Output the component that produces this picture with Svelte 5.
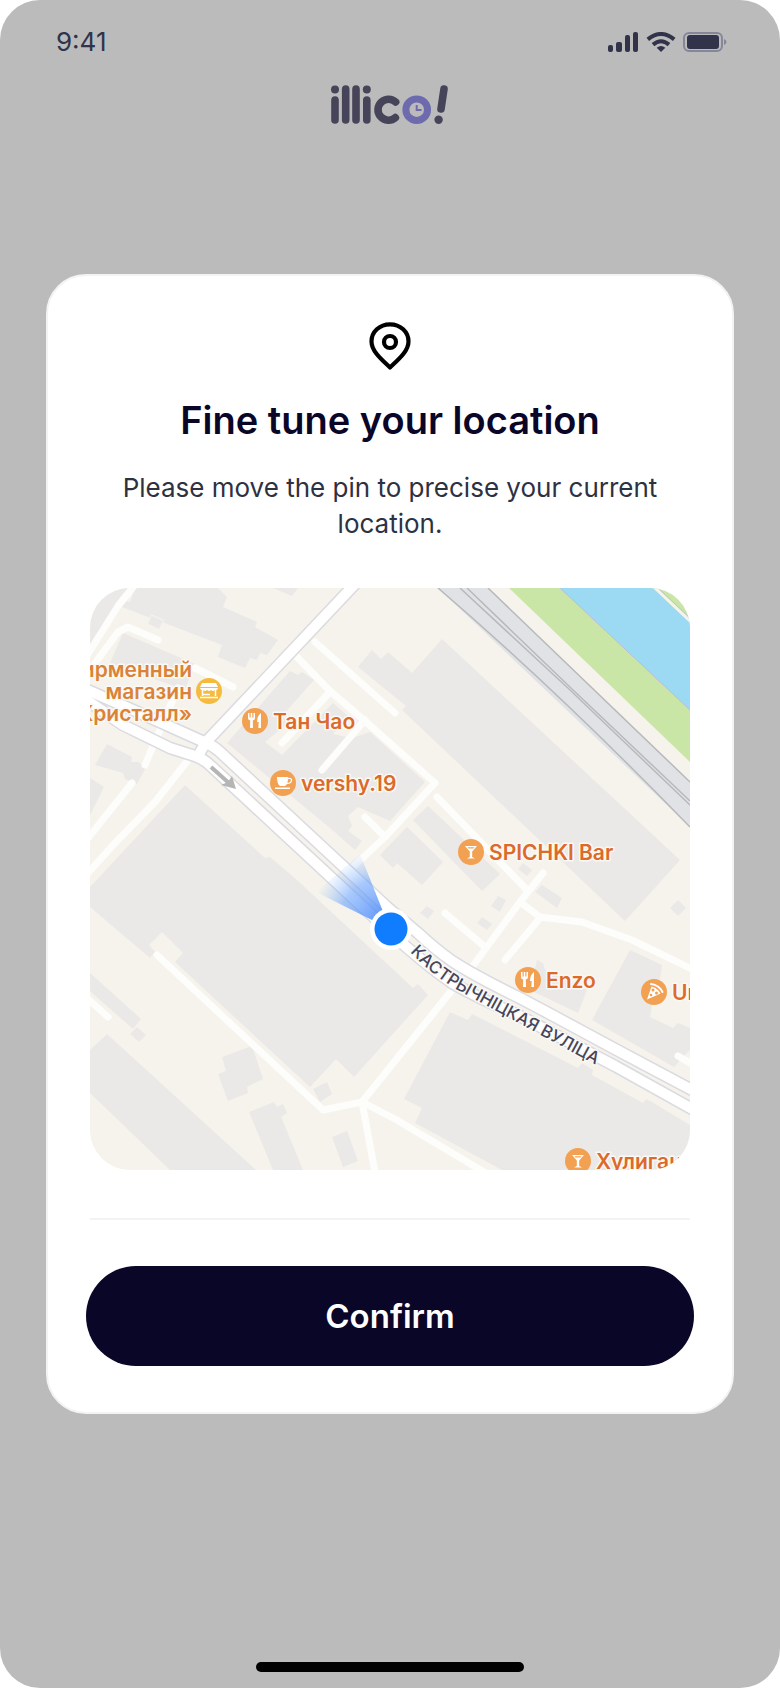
<script lang="ts">
  type Place = {
    name: string;
    icon: 'food' | 'coffee' | 'bar' | 'pizza';
    x: number;
    y: number;
  };

  const places: Place[] = [
    { name: 'Тан Чао', icon: 'food', x: 165, y: 133 },
    { name: 'vershy.19', icon: 'coffee', x: 193, y: 195 },
    { name: 'SPICHKI Bar', icon: 'bar', x: 381, y: 264 },
    { name: 'Enzo', icon: 'food', x: 438, y: 392 },
    { name: 'Ur', icon: 'pizza', x: 564, y: 404 },
    { name: 'Хулиган', icon: 'bar', x: 488, y: 573 }
  ];

  const buildings = [
    '0,0 38,0 28,12 25,17 8,52 0,62',
    '45,0 128,0 137,9 133,19 167,34 165,39 188,52 177,67 170,65 167,72 160,70 155,80 128,69 132,57 72,34 58,29 27,17 28,10 40,14',
    '33,45 105,76 95,102 20,75',
    '183,0 208,0 202,8',
    '200,83 208,87 212,84 224,92 192,128 199,134 175,154 192,167 243,115 258,128 243,146 262,150 280,144 335,194 300,233 268,219 258,228 262,238 258,243 272,253 265,262 240,240 137,155',
    '282,62 291,71 298,64 322,85 352,51 590,272 535,333 312,122 316,118 268,79',
    '338,218 410,286 392,303 323,232',
    '317,239 353,274 332,297 307,275 303,280 290,267',
    '433,275 442,282 437,288 428,281',
    '452,297 472,310 467,320 445,304',
    '408,308 416,312 410,324 401,318',
    '337,318 344,323 338,331 330,325',
    '392,329 402,336 397,342 387,335',
    '588,312 596,320 588,328 580,320',
    '447,372 453,375 455,382 497,402 488,425 440,402',
    '540,362 572,377 570,392 566,395 560,429 583,440 588,435 600,440 600,462 593,469 584,479 502,432',
    '360,424 378,432 382,426 488,480 492,475 503,482 502,487 553,515 556,511 562,514 600,537 600,582 412,582 325,535 332,520 314,511',
    '95,197 175,270 180,269 207,292 323,400 328,396 338,407 264,489 246,471 220,499 85,374 93,365 72,344 59,357 65,364 60,370 0,319 0,299',
    '0,385 51,431 43,441 0,403',
    '47,439 56,447 49,454 40,446',
    '17,446 166,582 80,582 0,505 0,462',
    '132,469 162,458 173,491 157,499 158,505 138,513 128,486 136,483',
    '159,524 184,514 187,519 193,516 197,525 191,529 213,582 183,582',
    '237,494 242,506 230,514 223,501',
    '257,543 268,573 253,579 242,549',
    '17,156 42,169 41,174 48,174 56,179 47,196 35,191 33,185 5,177',
    '0,190 14,199 0,227'
  ];

  const lanes = [
    'M44 -2L28 18L-2 66',
    'M-2 85L28 44L38 39L68 52',
    'M105 80L143 99',
    'M88 100L55 177',
    'M98 172L65 214L25 255L-2 285',
    'M42 195L-2 250',
    'M207 69L240 103L275 133L345 195L295 249L262 280',
    'M225 54L305 125',
    'M240 104L192 155',
    'M275 132L232 182',
    'M275 229L293 247',
    'M347 209L437 302',
    'M453 285L430 314L382 379',
    'M430 314L450 329L492 334L542 352L602 381',
    'M450 330L415 372',
    'M355 325L395 359',
    'M362 402L272 514L233 522L67 367',
    'M272 514L285 584',
    'M272 514L305 531L394 584',
    'M-2 411L18 429',
    'M588 468L602 476'
  ];

  const roads = [
    'M266 -5L116 154L108 168',
    'M-5 101L43 122L112 153Q122 157 129 163L297 319L328 345Q345 361 362 373Q385 388 428 409L462 427L525 461L604 503',
    'M-5 111L33 137L80 160L105 168Q114 171 122 179L301 345Q332 374 362 395Q390 411 428 427L525 478L604 522'
  ];

  const shopLines = [
    { text: 'Фирменный', y: 89 },
    { text: 'магазин', y: 111 },
    { text: '«Кристалл»', y: 133 }
  ];

  let confirmed = false;
</script>

<main class="screen">
  <div class="status-bar">
    <span class="time">9:41</span>
    <svg class="status-icons" viewBox="0 0 120 20" role="img" aria-label="Signal, Wi-Fi, battery">
      <g fill="#30334a">
        <rect x="0" y="13" width="5" height="7" rx="2" />
        <rect x="8" y="10" width="6" height="10" rx="2" />
        <rect x="17" y="3" width="5" height="17" rx="2" />
        <rect x="25" y="0" width="5" height="20" rx="2" />
        <path d="M53 20L48.7 15.7Q53 12.2 57.3 15.7Z" />
        <rect x="79" y="3" width="32" height="14" rx="3" />
      </g>
      <g fill="none" stroke="#30334a" stroke-width="4">
        <path d="M39.8 7.4Q53 -3.4 66.2 7.4" />
        <path d="M45 12.6Q53 6 61 12.6" />
      </g>
      <rect x="76" y="1" width="38" height="18" rx="5" fill="none" stroke="#85869a" stroke-width="2" />
      <path d="M116 7Q118.5 8 118.5 10T116 13Z" fill="#85869a" />
    </svg>
  </div>

  <svg class="logo" viewBox="0 0 118 41" role="img" aria-label="illico!">
    <g stroke="#464459" stroke-width="7.6" stroke-linecap="round" fill="none">
      <line x1="4" y1="16" x2="4" y2="36" />
      <line x1="14.7" y1="5" x2="14.7" y2="36" />
      <line x1="25" y1="5" x2="25" y2="36" />
      <line x1="35.8" y1="16" x2="35.8" y2="36" />
      <circle cx="57.5" cy="25.7" r="10.5" stroke-dasharray="48 18" transform="rotate(49 57.5 25.7)" />
      <line x1="113" y1="5" x2="110" y2="25" />
    </g>
    <g fill="#464459">
      <circle cx="4" cy="5.5" r="4" />
      <circle cx="35.8" cy="5.5" r="4" />
      <circle cx="107.6" cy="35.7" r="4.2" />
    </g>
    <circle cx="85.7" cy="25.7" r="10.8" fill="none" stroke="#6d6bad" stroke-width="7" />
    <polyline points="85.7,21 85.7,26 90.5,26" fill="none" stroke="#6d6bad" stroke-width="2" />
  </svg>

  <section class="card" role="dialog" aria-labelledby="title" aria-describedby="hint">
    <svg class="pin" viewBox="0 0 42 48" aria-hidden="true">
      <path
        d="M21 45.5C12 37 2.5 29 2.5 19.5C2.5 10 10.5 2.3 21 2.3S39.5 10 39.5 19.5C39.5 29 30 37 21 45.5Z"
        fill="none" stroke="#000" stroke-width="4.2" stroke-linejoin="round" />
      <circle cx="21" cy="20" r="6" fill="none" stroke="#000" stroke-width="4.2" />
    </svg>
    <h1 id="title">Fine tune your location</h1>
    <p id="hint">Please move the pin to precise your current location.</p>

    <svg class="map" viewBox="0 0 600 582" role="img" aria-label="Map">
      <defs>
        <radialGradient id="beam" gradientUnits="userSpaceOnUse" cx="300" cy="341" r="82">
          <stop offset="0.2" stop-color="#4f8dfb" stop-opacity="0.85" />
          <stop offset="0.65" stop-color="#6fa5fa" stop-opacity="0.6" />
          <stop offset="1" stop-color="#8dbbfa" stop-opacity="0" />
        </radialGradient>
        <path id="street" d="M320 364Q345 390 373 405L530 490" />
      </defs>

      <rect width="600" height="582" fill="#f6f3ec" />

      <!-- river and its banks -->
      <path d="M419 0H600V174Z" fill="#c9e6a6" />
      <path d="M470 0H563L600 35V122Z" fill="#9cd9f3" />
      <path d="M470 0L600 122" stroke="#b9bddc" fill="none" />
      <path d="M564 -1L601 34" stroke="#f6f3ec" stroke-width="3" fill="none" />
      <path d="M567 -1L601 31" stroke="#bfc3d0" fill="none" />

      <!-- railway -->
      <path d="M348 0H398L600 194V239Z" fill="#e1e2e6" />
      <path d="M348 0Q470 105 600 239M398 0L600 194" stroke="#b7b9bb" stroke-width="1.5" fill="none" />
      <path d="M370 0L480 102L600 217M377 0L482 101L600 213" stroke="#b7b9bb" stroke-width="1.5" fill="none" />

      {#each buildings as points}
        <polygon {points} fill="#eae9e7" />
      {/each}

      <g fill="none" stroke="#fdfdfb" stroke-width="7" stroke-linecap="round" stroke-linejoin="round">
        {#each lanes as d}
          <path {d} />
        {/each}
      </g>

      <rect x="59" y="29" width="13" height="10" fill="#eae9e7" stroke="#f4f3f1" transform="rotate(24 65 34)" />

      <g fill="none" stroke="#dadae1" stroke-width="13" stroke-linejoin="round">
        {#each roads as d}
          <path {d} />
        {/each}
      </g>
      <g fill="none" stroke="#fff" stroke-width="10" stroke-linejoin="round">
        {#each roads as d}
          <path {d} />
        {/each}
      </g>

      <path d="M121 179L140 196" stroke="#b5b5b5" stroke-width="4" fill="none" />
      <path d="M146 201L142 188L138 194L131 197Z" fill="#b5b5b5" />

      <text class="street-name">
        <textPath href="#street">КАСТРЫЧНІЦКАЯ ВУЛІЦА</textPath>
      </text>

      <g class="shop">
        {#each shopLines as line}
          <text x="102" y={line.y} text-anchor="end">{line.text}</text>
        {/each}
      </g>
      <g transform="translate(119 103)">
        <circle r="13" fill="#f5ba3e" />
        <path d="M-7 -8H7L9 -4H-9Z" fill="#fff" />
        <path d="M-9 -3H9Q8 0 6 -1Q4 1 2 -1Q0 1 -2 -1Q-4 1 -6 -1Q-8 0 -9 -3Z" fill="#fff" />
        <path d="M-6.5 -1V5M6.5 -1V5M-9 6.5H9M-6 3.5H1" stroke="#fff" stroke-width="1.5" />
      </g>

      {#each places as place}
        <g transform={`translate(${place.x} ${place.y})`}>
          <circle r="13" fill="#f2a152" />
          {#if place.icon === 'food'}
            <path d="M-7 -8V-3Q-7 -1 -4.8 -0.5L-5 7H-2L-2.2 -0.5Q0 -1 0 -3V-8H-1.5V-3.5H-2.7V-8H-4.3V-3.5H-5.5V-8Z" fill="#fff" />
            <path d="M6 -8Q2 -5 2 1H3.7L3.3 7H6Z" fill="#fff" />
          {:else if place.icon === 'coffee'}
            <path d="M-6 -6H5Q5 2 2 3H-3Q-6 1 -6 -6ZM-8 4.5H7V6H-8Z" fill="#fff" />
            <path d="M5 -4.5Q9 -5 8.5 -2.5Q8 0.5 4 0.5" fill="none" stroke="#fff" stroke-width="1.4" />
          {:else if place.icon === 'bar'}
            <path d="M-6 -6H6L1.2 -0.5V5L4 6.5H-4L-1.2 5V-0.5Z" fill="#fff" />
            <path d="M-3.5 -4.8H3.5L2.5 -3.6H-2.5Z" fill="#f2a152" />
          {:else}
            <path d="M-7 7.5L-2.5 -5.5Q3.5 -4 6.5 1.5Z" fill="#fff" />
            <path d="M-3 -8Q5 -7 8.5 0" fill="none" stroke="#fff" stroke-width="2" stroke-linecap="round" />
            <circle cx="-1" cy="-2" r="1.5" fill="#f2a152" />
            <circle cx="2.5" cy="1" r="1.5" fill="#f2a152" />
            <circle cx="-3" cy="3" r="1.3" fill="#f2a152" />
          {/if}
          <text class="place" x="18" y="8">{place.name}</text>
        </g>
      {/each}

      <path d="M300 341L226 304L270 266Z" fill="url(#beam)" />
      <circle cx="301" cy="341" r="21" fill="#fff" />
      <circle cx="301" cy="341" r="16.5" fill="#107dff" />
    </svg>

    <hr />
    <button type="button" on:click={() => (confirmed = true)} disabled={confirmed}>Confirm</button>
  </section>

  <div class="home-indicator"></div>
</main>

<style>
  :global(body) {
    margin: 0;
    background: #fff;
  }

  .screen {
    box-sizing: border-box;
    display: flex;
    flex-direction: column;
    min-height: 100vh;
    padding: 24px 46px 16px;
    border-radius: 40px;
    background: #bbb;
    font-family: Inter, 'Noto Sans', sans-serif;
  }

  .status-bar {
    display: flex;
    align-items: center;
    justify-content: space-between;
    height: 36px;
    padding: 0 6px 0 10px;
  }

  .time {
    color: #30334a;
    font-size: 26px;
    line-height: 36px;
  }

  .status-icons {
    width: 120px;
    height: 20px;
  }

  .logo {
    align-self: center;
    width: 118px;
    height: 41px;
    margin-top: 24px;
  }

  .card {
    box-sizing: border-box;
    display: flex;
    flex-direction: column;
    align-items: center;
    margin: 149px 0 40px;
    padding: 46px 38px;
    border: 2px solid #f3f3f3;
    border-radius: 40px;
    background: #fff;
    text-align: center;
  }

  .pin {
    width: 42px;
    height: 48px;
  }

  h1 {
    margin: 24px 0 0;
    color: #0a0628;
    font-size: 38px;
    font-weight: 600;
    line-height: 52px;
  }

  p {
    margin: 24px 32px 0;
    color: #2e3142;
    font-size: 26px;
    line-height: 36px;
  }

  .map {
    display: block;
    width: calc(100% - 8px);
    margin-top: 46px;
    border-radius: 40px;
    overflow: hidden;
  }

  .map text {
    stroke: #fbf9f5;
    stroke-width: 3px;
    stroke-linejoin: round;
    paint-order: stroke;
  }

  .place,
  .shop {
    fill: #dc6a2a;
    font-size: 21px;
    font-weight: 600;
  }

  .shop {
    fill: #da8338;
  }

  .street-name {
    fill: #45455c;
    font-size: 17px;
    font-weight: 500;
  }

  hr {
    width: calc(100% - 8px);
    height: 2px;
    margin: 48px 0 46px;
    border: 0;
    background: #f3f3f3;
  }

  button {
    width: 100%;
    height: 100px;
    border: 0;
    border-radius: 50px;
    background: #0a0628;
    color: #fff;
    font-family: inherit;
    font-size: 33px;
    font-weight: 600;
    cursor: pointer;
  }

  .home-indicator {
    align-self: center;
    width: 268px;
    height: 10px;
    margin-top: auto;
    border-radius: 5px;
    background: #000;
  }
</style>
